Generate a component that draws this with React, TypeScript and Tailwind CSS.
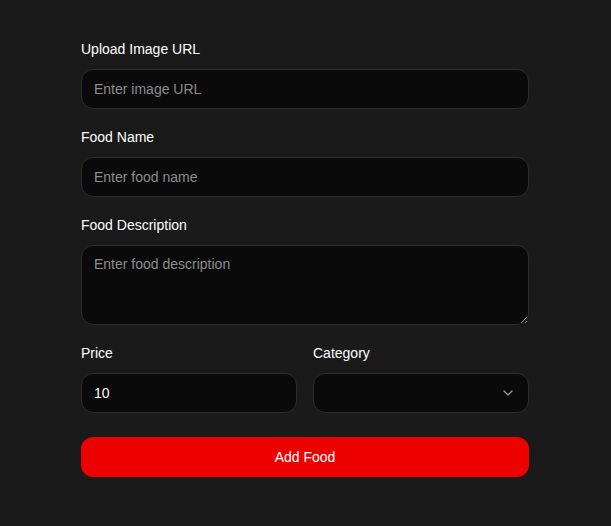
import React from "react";

const inputCls =
  "w-full h-10 rounded-xl border border-[#2c2c2c] bg-[#0a0a0a] px-3 text-sm text-white placeholder:text-[#8c8c8c] outline-none";

export default function App() {
  return (
    <div
      className="min-h-screen w-full bg-[#1a1a1a] pt-[39px]"
      style={{ fontFamily: '"Liberation Sans", Arial, sans-serif' }}
    >
      <form className="ml-[81px] w-[448px] flex flex-col" onSubmit={(e) => e.preventDefault()}>
        <div className="flex flex-col gap-[10px]">
          <label className="text-sm leading-5 text-white">Upload Image URL</label>
          <input className={inputCls} placeholder="Enter image URL" />
        </div>
        <div className="mt-[18px] flex flex-col gap-[10px]">
          <label className="text-sm leading-5 text-white">Food Name</label>
          <input className={inputCls} placeholder="Enter food name" />
        </div>
        <div className="mt-[18px] flex flex-col gap-[10px]">
          <label className="text-sm leading-5 text-white">Food Description</label>
          <textarea
            className="w-full h-20 rounded-xl border border-[#2c2c2c] bg-[#0a0a0a] px-3 py-2 text-sm text-white placeholder:text-[#8c8c8c] outline-none block"
            placeholder="Enter food description"
          />
        </div>
        <div className="mt-[18px] grid grid-cols-2 gap-4">
          <div className="flex flex-col gap-[10px]">
            <label className="text-sm leading-5 text-white">Price</label>
            <input className={inputCls} defaultValue="10" />
          </div>
          <div className="flex flex-col gap-[10px]">
            <label className="text-sm leading-5 text-white">Category</label>
            <div className="relative">
              <select className={inputCls + " appearance-none"} defaultValue="">
                <option value=""></option>
              </select>
              <svg
                className="pointer-events-none absolute right-[16px] top-1/2 -translate-y-1/2"
                width="10"
                height="6"
                viewBox="0 0 10 6"
                fill="none"
              >
                <path d="M1 1l4 4 4-4" stroke="#9a9a9a" strokeWidth="1.3" strokeLinecap="round" strokeLinejoin="round" />
              </svg>
            </div>
          </div>
        </div>
        <button
          type="submit"
          className="mt-6 h-10 w-full rounded-xl bg-[#ec0000] text-sm text-white"
        >
          Add Food
        </button>
      </form>
    </div>
  );
}
